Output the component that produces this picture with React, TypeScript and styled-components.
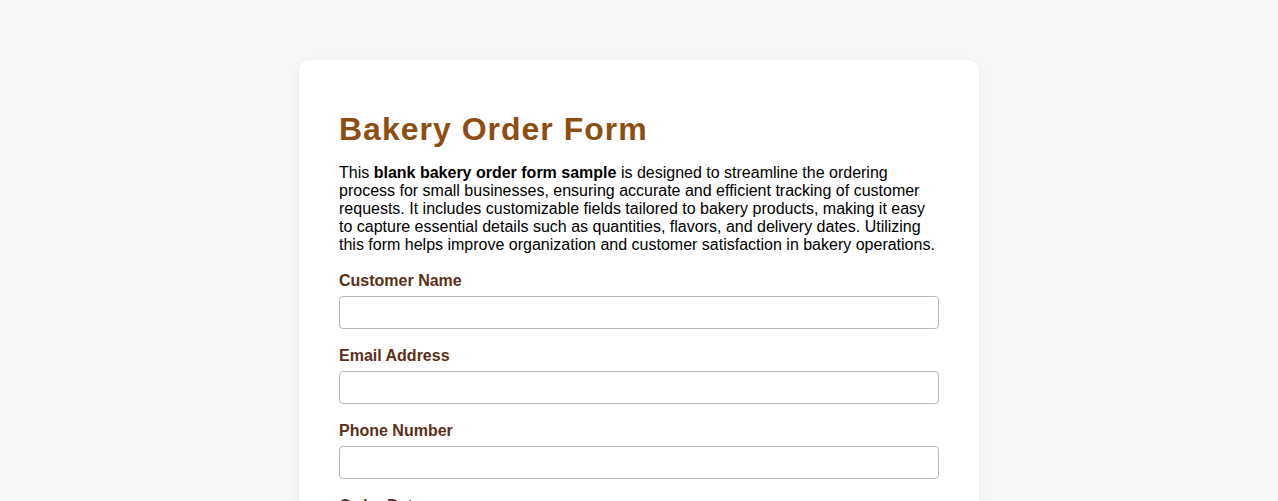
import React from "react";
import styled, { createGlobalStyle } from "styled-components";

const GlobalStyle = createGlobalStyle`
    body {
        margin: 0;
        background: #f7f7f5;
        font-family: "Liberation Sans", Arial, sans-serif;
        color: #000;
    }
`;

const   Card = styled.main`
            width: 680px;
            box-sizing: border-box;
            margin: 60px auto;
            padding: 51px 40px 40px;
            background: #fff;
            border-radius: 10px;
            box-shadow: 0 2px 10px rgba(0, 0, 0, 0.05);
        `,
        Title = styled.h1`
            margin: 0 0 16px;
            font-size: 32px;
            letter-spacing: 1px;
            color: #8b4f14;
        `,
        Intro = styled.p`
            margin: 0 0 18px;
            font-size: 16px;
            line-height: 18px;
        `,
        Field = styled.div`
            display: flex;
            flex-direction: column;
            gap: 6px;
            margin-bottom: 18px;
        `,
        Label = styled.label`
            font-size: 16px;
            font-weight: bold;
            line-height: 18px;
            color: #5a3118;
        `,
        Input = styled.input`
            height: 33px;
            box-sizing: border-box;
            width: 100%;
            padding: 6px 8px;
            font: 16px "Liberation Sans", Arial, sans-serif;
            border: 1px solid #bdb8b3;
            border-radius: 4px;
        `;

const fields = [
    { id: "name", label: "Customer Name", type: "text" },
    { id: "email", label: "Email Address", type: "email" },
    { id: "phone", label: "Phone Number", type: "tel" },
    { id: "date", label: "Order Date", type: "text" },
];

export default function App () {
    return (
        <>
            <GlobalStyle />
            <Card>
                <Title>Bakery Order Form</Title>
                <Intro>
                    This <strong>blank bakery order form sample</strong> is designed to streamline the ordering
                    process for small businesses, ensuring accurate and efficient tracking of customer
                    requests. It includes customizable fields tailored to bakery products, making it easy
                    to capture essential details such as quantities, flavors, and delivery dates. Utilizing
                    this form helps improve organization and customer satisfaction in bakery operations.
                </Intro>
                {fields.map(field => (
                    <Field key={field.id}>
                        <Label htmlFor={field.id}>{field.label}</Label>
                        <Input id={field.id} type={field.type} />
                    </Field>
                ))}
            </Card>
        </>
    );
}
